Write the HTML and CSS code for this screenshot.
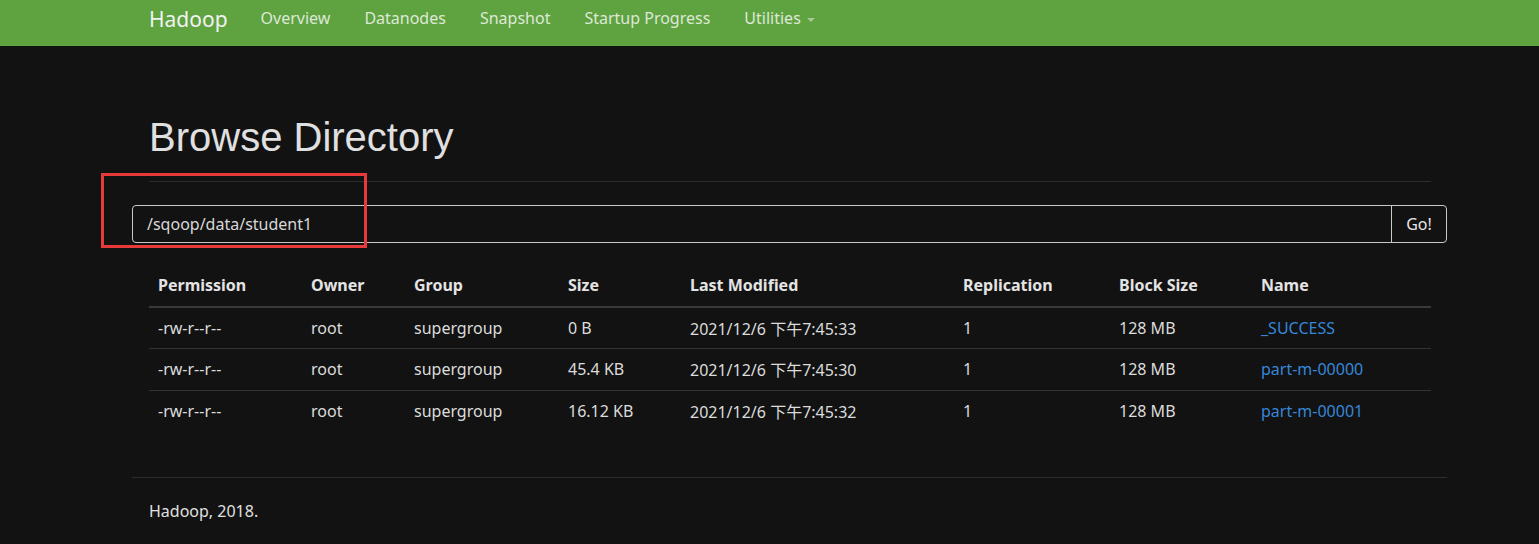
FILE: index.html
```html
<!DOCTYPE html>
<html>
<head>
<meta charset="utf-8">
<link rel="stylesheet" href="styles.css">
</head>
<body>
<header class="navbar">
  <div class="nav-inner">
    <span class="brand">Hadoop</span>
    <ul class="nav">
      <li>Overview</li>
      <li>Datanodes</li>
      <li>Snapshot</li>
      <li>Startup Progress</li>
      <li>Utilities <span class="caret"></span></li>
    </ul>
  </div>
</header>
<main class="page">
  <div class="inner">
    <h1 class="title">Browse Directory</h1>
    <hr class="rule">
  </div>
  <div class="search">
    <div class="path">/sqoop/data/student1</div>
    <div class="go">Go!</div>
  </div>
  <div class="inner">
    <table class="files">
      <colgroup>
        <col style="width:153px"><col style="width:103px"><col style="width:154px"><col style="width:122px"><col style="width:273px"><col style="width:156px"><col style="width:142px"><col style="width:179px">
      </colgroup>
      <thead>
        <tr><th>Permission</th><th>Owner</th><th>Group</th><th>Size</th><th>Last Modified</th><th>Replication</th><th>Block Size</th><th>Name</th></tr>
      </thead>
      <tbody>
        <tr><td>-rw-r--r--</td><td>root</td><td>supergroup</td><td>0 B</td><td>2021/12/6 下午7:45:33</td><td>1</td><td>128 MB</td><td><a class="link">_SUCCESS</a></td></tr>
        <tr><td>-rw-r--r--</td><td>root</td><td>supergroup</td><td>45.4 KB</td><td>2021/12/6 下午7:45:30</td><td>1</td><td>128 MB</td><td><a class="link">part-m-00000</a></td></tr>
        <tr><td>-rw-r--r--</td><td>root</td><td>supergroup</td><td>16.12 KB</td><td>2021/12/6 下午7:45:32</td><td>1</td><td>128 MB</td><td><a class="link">part-m-00001</a></td></tr>
      </tbody>
    </table>
  </div>
  <hr class="footer-rule">
  <footer class="inner footer">Hadoop, 2018.</footer>
  <div class="annotation"></div>
</main>
</body>
</html>
```
FILE: styles.css
```css
html, body {
  margin: 0;
  padding: 0;
  background: #121212;
}
body {
  font-family: "Noto Sans", "Noto Sans CJK SC", sans-serif;
  font-size: 16px;
  color: #dcdcdc;
  height: 544px;
  overflow: hidden;
}
.navbar {
  background: #5ea33f;
  height: 46px;
}
.nav-inner {
  margin-left: 149px;
  display: flex;
  align-items: center;
  height: 46px;
}
.brand {
  font-size: 21px;
  color: #f2f2f2;
  margin-right: 33px;
  line-height: 1;
  padding-bottom: 8px;
}
.nav {
  display: flex;
  list-style: none;
  margin: 0;
  padding: 0;
  gap: 34px;
}
.nav li {
  color: #dfe8d8;
  font-size: 16px;
  line-height: 1;
  padding-bottom: 10px;
}
.caret {
  display: inline-block;
  width: 0;
  height: 0;
  border-left: 4px solid transparent;
  border-right: 4px solid transparent;
  border-top: 4px solid #a8c898;
  vertical-align: middle;
  margin-left: 2px;
}
.page {
  position: relative;
  margin-left: 132px;
  width: 1315px;
}
.inner {
  padding: 0 16px 0 17px;
}
.title {
  font-family: "Liberation Sans", Arial, sans-serif;
  font-weight: normal;
  font-size: 40px;
  line-height: 44px;
  color: #e0e0e0;
  margin: 0;
  padding-top: 69px;
}
.rule {
  border: 0;
  border-top: 1px solid #2c2c2c;
  margin: 22px 0 0 0;
  height: 0;
}
.search {
  margin-top: 23px;
  display: flex;
  height: 38px;
  border: 1px solid #c8c8c8;
  border-radius: 4px;
  box-sizing: border-box;
}
.path {
  flex: 1;
  display: flex;
  align-items: center;
  padding-left: 14px;
  color: #d8d8d8;
}
.go {
  width: 54px;
  border-left: 1px solid #c8c8c8;
  display: flex;
  align-items: center;
  justify-content: center;
  color: #e6e6e6;
}
.files {
  margin-top: 22px;
  width: 1282px;
  border-collapse: collapse;
  table-layout: fixed;
}
.files th {
  text-align: left;
  font-weight: bold;
  padding: 7px 9px 8px;
  height: 42px;
  box-sizing: border-box;
  border-bottom: 2px solid #393939;
  color: #e4e4e4;
}
.files td {
  padding: 8px 9px;
  height: 41.5px;
  box-sizing: border-box;
  border-top: 1px solid #333;
  white-space: nowrap;
}
.files tbody tr:first-child td {
  border-top: 0;
}
.link {
  color: #3687d8;
}
.footer-rule {
  border: 0;
  border-top: 1px solid #2c2c2c;
  margin: 45px 0 0 0;
  height: 0;
}
.footer {
  padding-top: 22px;
  color: #e0e0e0;
}
.annotation {
  position: absolute;
  left: -31px;
  top: 127px;
  width: 266px;
  height: 75px;
  border: 3px solid #e83a3a;
  box-sizing: border-box;
}
```
